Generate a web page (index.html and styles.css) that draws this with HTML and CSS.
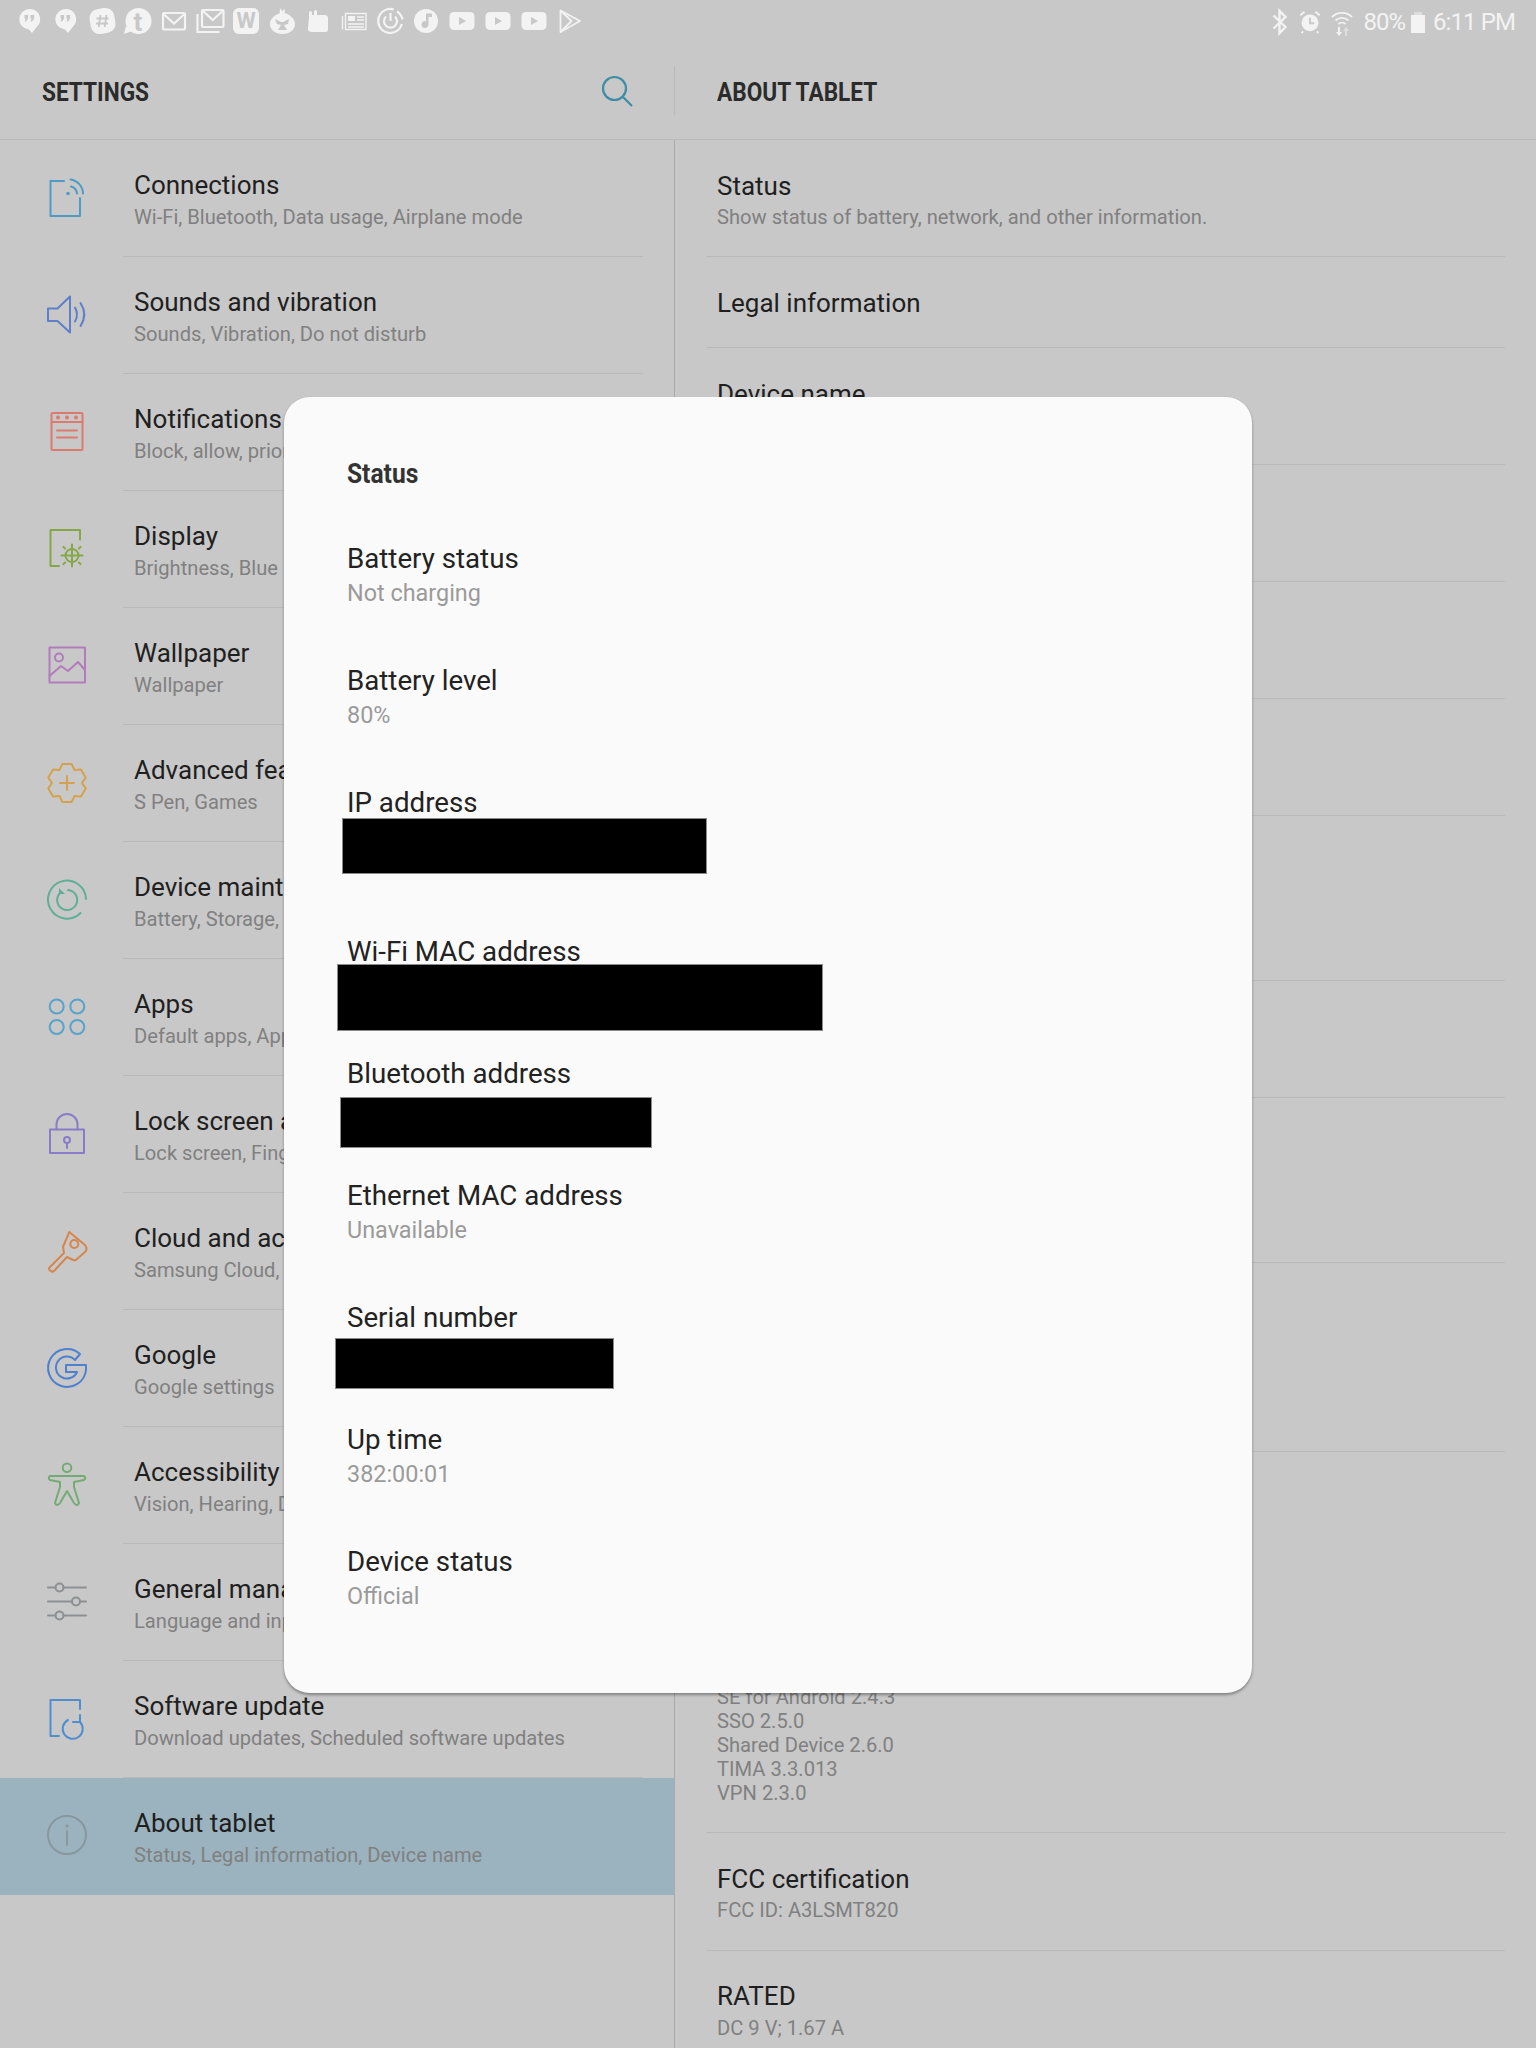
FILE: index.html
```html
<!DOCTYPE html>
<html lang="en">
<head>
<meta charset="utf-8">
<title>Settings - About tablet</title>
<link rel="stylesheet" href="styles.css">
</head>
<body>
<div class="screen">
  <header class="statusbar">
    <div class="notif-icons">
      <svg class="si" viewBox="0 0 36 44"><path class="w" d="M18 9a10.200 10.200 0 0 0-1 20.400l3 3.600 7-9a10.200 10.200 0 0 0-9-15z"/><path class="g" d="M12.500 15h3.600v3.400l-2 3h-1.500l1-3h-1.100zM18.500 15h3.600v3.400l-2 3h-1.500l1-3h-1.100z"/></svg>
      <svg class="si" viewBox="0 0 36 44"><path class="w" d="M18 9a10.200 10.200 0 0 0-1 20.400l3 3.600 7-9a10.200 10.200 0 0 0-9-15z"/><path class="g" d="M12.500 15h3.600v3.400l-2 3h-1.500l1-3h-1.100zM18.500 15h3.600v3.400l-2 3h-1.500l1-3h-1.100z"/></svg>
      <svg class="si" viewBox="0 0 36 44"><rect class="w" x="6" y="8.500" width="25" height="25" rx="9" transform="rotate(-10 18.500 21)"/><path class="gs2" d="M16.500 15l-1.800 12M22.500 15l-1.800 12M12.500 18.500h12M12 23.500h12"/></svg>
      <svg class="si" viewBox="0 0 36 44"><circle class="w" cx="18.500" cy="21" r="13"/><path class="w" d="M6 26l-2 8 8-3z"/><text class="glyph glyph-t" x="13.500" y="31">t</text></svg>
      <svg class="si" viewBox="0 0 36 44"><rect class="ws" x="7" y="13" width="22" height="16.500" rx="1"/><path class="ws" d="M7.500 14l10.500 9.500 10.500-9.500"/></svg>
      <svg class="si" viewBox="0 0 36 44"><rect class="ws" x="10" y="10" width="21.500" height="17" rx="1"/><path class="ws" d="M11 11l9.800 9 9.800-9"/><path class="ws" d="M5.500 14v18h22"/></svg>
      <svg class="si" viewBox="0 0 36 44"><rect class="w" x="5" y="8" width="26" height="26" rx="6"/><text class="glyph glyph-w" x="18" y="28">W</text></svg>
      <svg class="si" viewBox="0 0 36 44"><path class="w" d="M16 8l2 3 3-2-.5 4c6 2 10.500 6 10.500 11 0 6-5.500 10-12.500 10S6 30 6 24c0-5 4-9 9.500-10.500z"/><path class="g" d="M11 19l6 3 2 0 6-3-1 5-4 1 3 5h-9l3-5-4-1z"/></svg>
      <svg class="si" viewBox="0 0 36 44"><path class="w" d="M9 17V12.500a1.500 1.500 0 0 1 3 0V15h2v-3.500a1.500 1.500 0 0 1 3 0V15h7q4 0 4 3v11q0 3-3 3H12q-4 0-4-3z"/></svg>
      <svg class="si" viewBox="0 0 36 44"><rect class="ws1" x="9.500" y="13.500" width="20.500" height="16"/><path class="ws1" d="M6.500 16v13.500"/><rect class="w" x="12" y="16" width="7" height="5"/><path class="ws1" d="M21 17h7M21 20h7M12 24h16M12 27h16"/></svg>
      <svg class="si" viewBox="0 0 36 44"><path class="ws" d="M29.800 24a12 12 0 1 1-8-14.500"/><path class="ws" d="M25 11.500a12 12 0 0 1 5.500 8"/><path class="ws" d="M14 16.500a6.500 6.500 0 1 0 9 0M18.500 13v8"/></svg>
      <svg class="si" viewBox="0 0 36 44"><circle class="w" cx="18" cy="21" r="12"/><path class="g" d="M18 13.500h6v3.500h-3.500v7.500a3.500 3.500 0 1 1-2.500-3.300z"/></svg>
      <svg class="si" viewBox="0 0 36 44"><rect class="w" x="5.500" y="12" width="25" height="18" rx="4.500"/><path class="g" d="M15 17l7 4-7 4z"/></svg>
      <svg class="si" viewBox="0 0 36 44"><rect class="w" x="5.500" y="12" width="25" height="18" rx="4.500"/><path class="g" d="M15 17l7 4-7 4z"/></svg>
      <svg class="si" viewBox="0 0 36 44"><rect class="w" x="5.500" y="12" width="25" height="18" rx="4.500"/><path class="g" d="M15 17l7 4-7 4z"/></svg>
      <svg class="si" viewBox="0 0 36 44"><path class="ws15" d="M8.500 10.500l19.500 10.500-19.500 11z"/><path class="ws15" d="M8.500 10.500l11 10.500-11 11"/></svg>
    </div>
    <div class="sys-icons">
      <svg class="bt" viewBox="0 0 18 28"><path d="M2.500 7.500L14.500 19 8.500 25V3l6 6L2.500 20.500"/></svg>
      <svg class="alarm" viewBox="0 0 26 28"><circle class="w" cx="13" cy="15" r="10"/><path class="gs" d="M13 9v6.500h5"/><path class="ws" d="M1.500 6l5-4M24.500 6l-5-4M5 25l-2 2M21 25l2 2"/></svg>
      <svg class="wifi" viewBox="0 0 22 28"><path class="ws15" d="M1 9a14 14 0 0 1 20 0M4.500 12.500a9.500 9.500 0 0 1 13 0M7.500 16a5 5 0 0 1 7 0"/><path class="w" d="M7 19v5H5l3 4 3-4H9v-5z"/><path class="wd" d="M14 28v-5h-2l3-4 3 4h-2v5z"/></svg>
      <span class="pct">80%</span>
      <span class="batt"></span>
      <span class="clock">6:11 PM</span>
    </div>
  </header>

  <div class="panes">
    <section class="left-pane">
      <div class="pane-head">
        <h1 class="head-title">SETTINGS</h1>
        <svg class="search" viewBox="0 0 34 34"><circle cx="14.500" cy="14.500" r="11.500"/><path d="M23 23l9 9"/></svg>
      </div>
      <nav class="menu">
        <a class="menu-row"><svg class="mi c-conn" viewBox="0 0 40 40"><path d="M17 3H3.500v35H33V20"/><circle class="dot" cx="21" cy="15.500" r="1.800"/><path d="M24 8.500a8 8 0 0 1 6 7M23.500 1.500a14.500 14.500 0 0 1 12.500 14"/></svg><div class="mt"><div class="t">Connections</div><div class="s">Wi-Fi, Bluetooth, Data usage, Airplane mode</div></div></a>
        <a class="menu-row"><svg class="mi c-sound" viewBox="0 0 40 40"><path d="M1 13.500h9.500L23 1.500v36l-12.500-11.500H1zM28 12.500q4 7 0 14M33.500 8q7.500 11.500 0 23"/></svg><div class="mt"><div class="t">Sounds and vibration</div><div class="s">Sounds, Vibration, Do not disturb</div></div></a>
        <a class="menu-row"><svg class="mi c-notif" viewBox="0 0 40 40"><rect x="4.500" y="1" width="31" height="37" rx="1"/><path d="M4.500 10h31M10 18.500h20M10 25.500h20"/><circle class="dot" cx="11" cy="5.500" r="2"/><circle class="dot" cx="20" cy="5.500" r="2"/><circle class="dot" cx="29" cy="5.500" r="2"/></svg><div class="mt"><div class="t">Notifications</div><div class="s">Block, allow, prioritize</div></div></a>
        <a class="menu-row"><svg class="mi c-disp" viewBox="0 0 40 40"><path d="M33 10.500V1H3.500v36H12"/><circle cx="25" cy="26.500" r="6.500"/><path d="M25 15.500v22M14.500 26.500h21M18 19.500l-1.600-1.600M32 19.500l1.600-1.600M18 33.500l-1.600 1.600M32 33.500l1.600 1.600"/></svg><div class="mt"><div class="t">Display</div><div class="s">Brightness, Blue light filter, Home screen</div></div></a>
        <a class="menu-row"><svg class="mi c-wall" viewBox="0 0 40 40"><rect x="2.500" y="1.500" width="35.500" height="35"/><circle cx="12" cy="11.500" r="4"/><path d="M2.500 30L14 20l7 5 10-9 7 8"/></svg><div class="mt"><div class="t">Wallpaper</div><div class="s">Wallpaper</div></div></a>
        <a class="menu-row"><svg class="mi c-adv" viewBox="0 0 40 40"><path d="M24.700 1.100H15.300L12.500 7 6 6.400 1.300 14.600 5 20 1.300 25.400 6 33.600 12.500 33 15.300 38.900H24.700L27.500 33 34 33.600 38.700 25.400 35 20 38.700 14.600 34 6.400 27.500 7zM20 13v14M13 20h14"/></svg><div class="mt"><div class="t">Advanced features</div><div class="s">S Pen, Games</div></div></a>
        <a class="menu-row"><svg class="mi c-care" viewBox="0 0 40 40"><path d="M39 19A19 19 0 1 0 33.500 33M21 10A10 10 0 1 1 13 13"/><path class="dot" d="M12 8v6h6z"/></svg><div class="mt"><div class="t">Device maintenance</div><div class="s">Battery, Storage, Memory</div></div></a>
        <a class="menu-row"><svg class="mi c-apps" viewBox="0 0 40 40"><circle cx="9.700" cy="9.500" r="7"/><circle cx="30.300" cy="9.500" r="7"/><circle cx="9.700" cy="30" r="7"/><circle cx="30.300" cy="30" r="7"/></svg><div class="mt"><div class="t">Apps</div><div class="s">Default apps, App permissions</div></div></a>
        <a class="menu-row"><svg class="mi c-lock" viewBox="0 0 40 40"><rect x="3" y="15.500" width="34" height="23.500"/><path d="M9.500 15.500V10.500a10.500 10.500 0 0 1 21 0v5M20 29v5"/><circle cx="20" cy="26" r="3"/></svg><div class="mt"><div class="t">Lock screen and security</div><div class="s">Lock screen, Fingerprints</div></div></a>
        <a class="menu-row"><svg class="mi c-key" viewBox="0 0 40 40"><path d="M22.300 1L38 14q3 4 0 7l-8 7q-2 2-4 1l-6-3L7 40q-2 1.500-4-.5-2-1.500 0-3.500l14-14-1-6z"/><circle cx="27.300" cy="13" r="4"/></svg><div class="mt"><div class="t">Cloud and accounts</div><div class="s">Samsung Cloud, Backup and restore</div></div></a>
        <a class="menu-row"><svg class="mi c-goog" viewBox="0 0 40 40"><path d="M33 6A19 19 0 1 0 39 22V17H19V24H30A11 11 0 1 1 28 12z"/></svg><div class="mt"><div class="t">Google</div><div class="s">Google settings</div></div></a>
        <a class="menu-row"><svg class="mi c-acc" viewBox="0 0 40 40"><circle cx="20" cy="2.700" r="4.300"/><path d="M3 11H37q2.500 2 0 4L27 17v5l5 16q-2 4-5 0L20 26 13 38q-3 4-5 0l5-16v-5L3 15q-2.500-2 0-4z"/></svg><div class="mt"><div class="t">Accessibility</div><div class="s">Vision, Hearing, Dexterity</div></div></a>
        <a class="menu-row"><svg class="mi c-gen" viewBox="0 0 40 40"><path d="M1 5.500h7.500M16.500 5.500H39M1 19.500h24M33 19.500h6M1 33.500h7.500M16.500 33.500H39"/><circle cx="12.500" cy="5.500" r="4"/><circle cx="29" cy="19.500" r="4"/><circle cx="12.500" cy="33.500" r="4"/></svg><div class="mt"><div class="t">General management</div><div class="s">Language and input</div></div></a>
        <a class="menu-row"><svg class="mi c-soft" viewBox="0 0 40 40"><path d="M33 10V1H3.500v36H12M21 21A10 10 0 1 0 33 23M33 16v7h-7"/></svg><div class="mt"><div class="t">Software update</div><div class="s">Download updates, Scheduled software updates</div></div></a>
        <a class="menu-row selected"><svg class="mi c-about" viewBox="0 0 40 40"><circle cx="20" cy="19" r="19"/><path d="M20 15v14"/><circle class="dot" cx="20" cy="10" r="1.500"/></svg><div class="mt"><div class="t">About tablet</div><div class="s">Status, Legal information, Device name</div></div></a>
      </nav>
    </section>

    <section class="right-pane">
      <div class="pane-head right-head">
        <h2 class="head-title">ABOUT TABLET</h2>
      </div>
      <div class="info-list">
        <div class="info h117"><div class="t">Status</div><div class="s">Show status of battery, network, and other information.</div></div>
        <div class="info h91"><div class="t">Legal information</div></div>
        <div class="info h117"><div class="t">Device name</div></div>
        <div class="info h117"></div>
        <div class="info h117"></div>
        <div class="info h117"></div>
        <div class="info h165"></div>
        <div class="info h117"></div>
        <div class="info h165"></div>
        <div class="info h189"></div>
        <div class="info h381"><div class="s list">SE for Android 2.4.3<br>SSO 2.5.0<br>Shared Device 2.6.0<br>TIMA 3.3.013<br>VPN 2.3.0</div></div>
        <div class="info h118"><div class="t">FCC certification</div><div class="s">FCC ID: A3LSMT820</div></div>
        <div class="info last"><div class="t">RATED</div><div class="s">DC 9 V; 1.67 A</div></div>
      </div>
    </section>
  </div>

  <div class="dialog">
    <h3 class="dlg-title">Status</h3>
    <div class="ditem"><div class="dt">Battery status</div><div class="ds">Not charging</div></div>
    <div class="ditem"><div class="dt">Battery level</div><div class="ds">80%</div></div>
    <div class="ditem tall"><div class="dt">IP address</div><div class="redact r-ip"></div></div>
    <div class="ditem"><div class="dt">Wi-Fi MAC address</div><div class="redact r-wifi"></div></div>
    <div class="ditem"><div class="dt">Bluetooth address</div><div class="redact r-bt"></div></div>
    <div class="ditem"><div class="dt">Ethernet MAC address</div><div class="ds">Unavailable</div></div>
    <div class="ditem"><div class="dt">Serial number</div><div class="redact r-sn"></div></div>
    <div class="ditem"><div class="dt">Up time</div><div class="ds">382:00:01</div></div>
    <div class="ditem"><div class="dt">Device status</div><div class="ds">Official</div></div>
  </div>
</div>
</body>
</html>
```
FILE: styles.css
```css
* { box-sizing: border-box; }
html, body { margin: 0; padding: 0; }
body { font-family: Roboto, "Noto Sans", sans-serif; background: #c8c8c8; }
.screen { position: relative; width: 1536px; height: 2048px; overflow: hidden; background: #c8c8c8; }

/* status bar */
.statusbar { display: flex; justify-content: space-between; height: 44px; padding-left: 12px; }
.notif-icons { display: flex; }
.si { width: 36px; height: 44px; flex: none; }
.w { fill: #f3f3f3; }
.wd { fill: #dedede; }
.g { fill: #c8c8c8; }
.gs { fill: none; stroke: #c8c8c8; stroke-width: 2.2; }
.gs2 { fill: none; stroke: #c8c8c8; stroke-width: 1.8; }
.ws { fill: none; stroke: #f3f3f3; stroke-width: 2.2; }
.ws1 { fill: none; stroke: #f3f3f3; stroke-width: 1.4; }
.ws15 { fill: none; stroke: #f3f3f3; stroke-width: 1.8; stroke-linejoin: round; }
.glyph { font-family: Roboto, sans-serif; font-weight: 700; fill: #c8c8c8; text-anchor: start; }
.glyph-t { font-size: 26px; }
.glyph-w { font-size: 22px; text-anchor: middle; }
.sys-icons { display: flex; align-items: center; height: 44px; padding-right: 21px; color: #f3f3f3; font-size: 24px; }
.bt { width: 18px; height: 28px; margin-right: 10px; fill: none; stroke: #f3f3f3; stroke-width: 2.4; }
.alarm { width: 22px; height: 24px; margin-right: 10px; }
.wifi { width: 22px; height: 28px; margin-right: 10px; }
.pct { letter-spacing: -1px; }
.batt { position: relative; width: 14px; height: 18px; margin: 3px 8px 0 6px; background: #f3f3f3; }
.batt::before { content: ""; position: absolute; left: 3px; top: -3px; width: 8px; height: 3px; background: #dedede; }
.clock { letter-spacing: -0.9px; }

/* panes */
.panes { display: flex; align-items: stretch; }
.left-pane { width: 674px; flex: none; }
.right-pane { flex: 1; min-width: 0; }
.pane-head { display: flex; align-items: center; justify-content: space-between; height: 96px; padding: 0 40px 0 42px; border-bottom: 1px solid #b9b9b9; }
.right-head { position: relative; padding-left: 43px; }
.right-head::before { content: ""; position: absolute; left: 0; top: 22px; width: 1px; height: 49px; background: #b9b9b9; }
.head-title { margin: 0; font-size: 26px; font-weight: 700; color: #2b2b2b; line-height: 34px; transform: scaleX(.87); transform-origin: left center; }
.search { width: 34px; height: 34px; margin-top: -2px; fill: none; stroke: #3f8ca6; stroke-width: 2.2; }

/* left menu */
.menu-row { display: flex; height: 117px; position: relative; }
.menu-row::after { content: ""; position: absolute; left: 123px; right: 31px; bottom: 0; height: 1px; background: #b9b9b9; }
.menu-row.selected { background: #9bb3be; }
.menu-row.selected::after { display: none; }
.mi { width: 40px; height: 40px; flex: none; margin: 38px 0 0 47px; overflow: visible; fill: none; stroke-width: 2; stroke-linejoin: round; stroke-linecap: round; }
.dot { stroke: none; }
.mt { margin-left: 47px; padding-top: 28px; white-space: nowrap; }
.t { font-size: 26px; line-height: 34px; color: #1f1f1f; }
.s { font-size: 20.150px; line-height: 30px; color: #808080; }

.c-conn { stroke: #4e9cc5; } .c-conn .dot { fill: #4e9cc5; }
.c-sound { stroke: #5f7fc8; }
.c-notif { stroke: #dd7a70; } .c-notif .dot { fill: #dd7a70; }
.c-disp { stroke: #86a748; }
.c-wall { stroke: #b27cbc; }
.c-adv { stroke: #d4a24e; }
.c-care { stroke: #5fae96; } .c-care .dot { fill: #5fae96; }
.c-apps { stroke: #58a3c9; }
.c-lock { stroke: #8a7cc8; }
.c-key { stroke: #d5864e; }
.c-goog { stroke: #4f7fd0; }
.c-acc { stroke: #73ac73; }
.c-gen { stroke: #8c9092; }
.c-soft { stroke: #4f8fd0; }
.c-about { stroke: #87979e; } .c-about .dot { fill: #87979e; }

/* right list */
.info-list { border-left: 1px solid #a9a9a9; height: 1908px; padding-right: 31px; }
.info { margin-left: 31px; padding: 29px 0 0 11px; border-bottom: 1px solid #b9b9b9; }
.info .t { margin-bottom: -1px; }
.h91 { height: 91px; }
.h117 { height: 117px; }
.h118 { height: 118px; }
.h165 { height: 165px; }
.h189 { height: 189px; }
.h381 { height: 381px; display: flex; flex-direction: column; justify-content: flex-end; padding: 0 0 27px 11px; }
.last { border-bottom: 0; padding-top: 28px; }
.last .t { margin-bottom: 0; }
.list { line-height: 24px; }

/* dialog */
.dialog { position: absolute; left: 284px; top: 397px; width: 968px; height: 1296px; padding: 60px 0 0 63px; background: #fafafa; border-radius: 26px; box-shadow: 0 2px 3px rgba(0,0,0,.35); }
.dlg-title { margin: 0 0 51px; font-size: 28px; line-height: 34px; font-weight: 700; color: #333; transform: scaleX(.877); transform-origin: left center; }
.ditem { position: relative; height: 122px; }
.ditem.tall { height: 149px; }
.dt { font-size: 27.700px; line-height: 34px; color: #222; }
.ds { font-size: 23.400px; line-height: 34px; color: #9a9a9a; }
.redact { position: absolute; background: #000; border: 1px solid #8a8a8a; }
.r-ip { left: -5px; top: 32px; width: 365px; height: 56px; }
.r-wifi { left: -10px; top: 29px; width: 486px; height: 67px; }
.r-bt { left: -7px; top: 40px; width: 312px; height: 51px; }
.r-sn { left: -12px; top: 37px; width: 279px; height: 51px; }
```
